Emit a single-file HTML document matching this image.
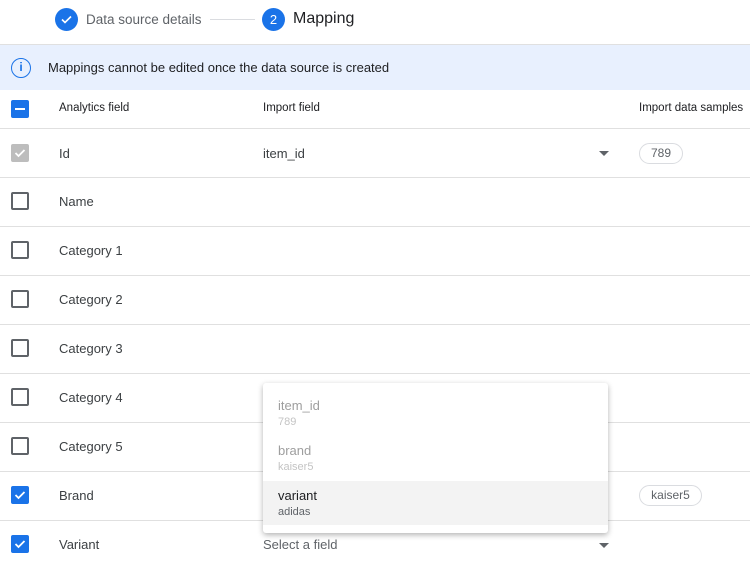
<!DOCTYPE html>
<html><head><style>
*{box-sizing:border-box;margin:0;padding:0}
body{width:750px;height:566px;overflow:hidden;background:#fff;font-family:"Liberation Sans",Arial,sans-serif;color:#3c4043;position:relative}
.abs{position:absolute}
.line{position:absolute;left:0;width:750px;height:1px;background:#e0e0e0}
.cb{position:absolute;left:11px;width:18px;height:18px;border:2px solid #5f6368;border-radius:2px}
.cb.on{background:#1a73e8;border-color:#1a73e8}
.cb.dis{background:#bdbdbd;border-color:#bdbdbd}
.t{position:absolute;font-size:13px;white-space:nowrap}
.arrow{position:absolute;width:0;height:0;border-left:5px solid transparent;border-right:5px solid transparent;border-top:5px solid #5f6368}
.chip{position:absolute;height:21px;border:1px solid #dadce0;border-radius:11px;font-size:12px;color:#5f6368;text-align:center;line-height:19px}
</style></head><body>
<div class="abs" style="left:55px;top:8px;width:23px;height:23px;border-radius:50%;background:#1a73e8"><svg width="23" height="23" viewBox="0 0 23 23"><path d="M7 11.5l3 3 6-6" stroke="#fff" stroke-width="1.6" fill="none"/></svg></div>
<div class="t" style="left:86px;top:12px;color:#5f6368;font-size:13.5px">Data source details</div>
<div class="abs" style="left:210px;top:19px;width:45px;height:1px;background:#dadce0"></div>
<div class="abs" style="left:262px;top:8px;width:23px;height:23px;border-radius:50%;background:#1a73e8;color:#fff;font-size:13px;text-align:center;line-height:23px">2</div>
<div class="t" style="left:293px;top:10px;font-size:16px;color:#202124">Mapping</div>
<div class="line" style="top:44px"></div>
<div class="abs" style="left:0;top:45px;width:750px;height:45px;background:#e8f0fe"></div>
<div class="abs" style="left:11px;top:58px;width:20px;height:20px;border:1.8px solid #1a73e8;border-radius:50%;color:#1a73e8;font-size:12px;text-align:center;line-height:17px;font-weight:bold">i</div>
<div class="t" style="left:48px;top:60px;color:#202124">Mappings cannot be edited once the data source is created</div>
<div class="cb on" style="top:100px"><div style="position:absolute;left:2px;top:6px;width:10px;height:2px;background:#fff"></div></div>
<div class="t" style="left:59px;top:102px;font-size:11.5px;color:#202124">Analytics field</div>
<div class="t" style="left:263px;top:102px;font-size:11.5px;color:#202124">Import field</div>
<div class="t" style="left:639px;top:102px;font-size:11.5px;color:#202124">Import data samples</div>
<div class="line" style="top:128px"></div>

<div class="cb dis" style="top:144px"><svg class="abs" style="left:0;top:0" width="14" height="14"><path d="M2.5 7l3 3 6-6" stroke="#fff" stroke-width="1.8" fill="none"/></svg></div>
<div class="t" style="left:59px;top:146px">Id</div>
<div class="t" style="left:263px;top:146px">item_id</div>
<div class="arrow" style="left:599px;top:151px"></div>
<div class="chip" style="left:639px;top:143px;width:44px">789</div>
<div class="line" style="top:177px"></div>

<div class="cb" style="top:192px"></div><div class="t" style="left:59px;top:194px">Name</div>
<div class="line" style="top:226px"></div>
<div class="cb" style="top:241px"></div><div class="t" style="left:59px;top:243px">Category 1</div>
<div class="line" style="top:275px"></div>
<div class="cb" style="top:290px"></div><div class="t" style="left:59px;top:292px">Category 2</div>
<div class="line" style="top:324px"></div>
<div class="cb" style="top:339px"></div><div class="t" style="left:59px;top:341px">Category 3</div>
<div class="line" style="top:373px"></div>
<div class="cb" style="top:388px"></div><div class="t" style="left:59px;top:390px">Category 4</div>
<div class="line" style="top:422px"></div>
<div class="cb" style="top:437px"></div><div class="t" style="left:59px;top:439px">Category 5</div>
<div class="line" style="top:471px"></div>
<div class="cb on" style="top:486px"><svg class="abs" style="left:0;top:0" width="14" height="14"><path d="M2.5 7l3 3 6-6" stroke="#fff" stroke-width="1.8" fill="none"/></svg></div>
<div class="t" style="left:59px;top:488px">Brand</div>
<div class="chip" style="left:639px;top:485px;width:63px">kaiser5</div>
<div class="line" style="top:520px"></div>
<div class="cb on" style="top:535px"><svg class="abs" style="left:0;top:0" width="14" height="14"><path d="M2.5 7l3 3 6-6" stroke="#fff" stroke-width="1.8" fill="none"/></svg></div>
<div class="t" style="left:59px;top:537px">Variant</div>
<div class="t" style="left:263px;top:537px;color:#5f6368">Select a field</div>
<div class="arrow" style="left:599px;top:543px"></div>

<div class="abs" style="left:263px;top:383px;width:345px;height:150px;background:#fff;border-radius:3px;box-shadow:0 2px 6px rgba(0,0,0,.3)">
<div class="t" style="left:15px;top:15px;color:#9e9e9e">item_id</div>
<div class="t" style="left:15px;top:33px;font-size:11px;color:#c4c4c4">789</div>
<div class="t" style="left:15px;top:60px;color:#9e9e9e">brand</div>
<div class="t" style="left:15px;top:78px;font-size:11px;color:#c4c4c4">kaiser5</div>
<div class="abs" style="left:0;top:98px;width:345px;height:44px;background:#f3f3f3"></div>
<div class="t" style="left:15px;top:105px;color:#202124">variant</div>
<div class="t" style="left:15px;top:123px;font-size:11px;color:#5f6368">adidas</div>
</div>
</body></html>
